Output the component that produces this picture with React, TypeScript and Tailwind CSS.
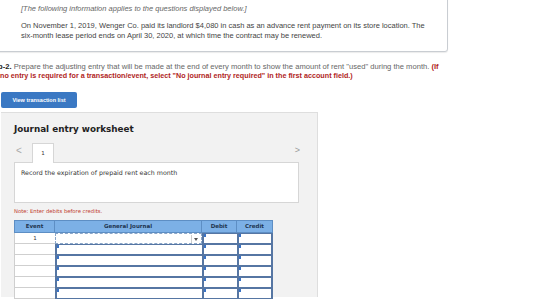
import React from "react";

const sans = { fontFamily: "'Liberation Sans', Arial, sans-serif" };
const verd = { fontFamily: "'DejaVu Sans', Verdana, sans-serif" };

function InputCell({ w, first, dd }: { w: string; first?: boolean; dd?: boolean }) {
  return (
    <div
      className={`${w} h-full relative bg-white ${
        first && dd
          ? "border border-dashed border-[#8aa6c8]"
          : "border-l-2 border-l-[#5676a3] border-b border-b-[#5676a3] border-t border-t-[#5676a3]"
      }`}
    >
      {!dd && <div className="absolute left-0 top-0 w-[2px] h-[3px] bg-[#3b73c4]" />}
      {dd && (
        <div className="absolute right-[3px] top-[1px] h-[8px] flex items-center border-l border-[#ccc] pl-[2px]">
          <div className="w-0 h-0 border-l-[2.5px] border-r-[2.5px] border-t-[3px] border-l-transparent border-r-transparent border-t-[#555]" />
        </div>
      )}
    </div>
  );
}

export default function App() {
  const rows = [0, 1, 2, 3, 4, 5];
  return (
    <div className="w-[560px] h-[307px] overflow-hidden bg-white relative" style={sans}>
      {/* info box */}
      <div className="ml-[-10px] mt-[-8px] w-[458px] h-[60px] border border-[#c9cdd2] rounded-[3px] bg-white pl-[30px] pt-[11px] shadow-[0_1px_1px_rgba(0,0,0,0.08)]">
        <div className="text-[7.5px] italic text-[#666] leading-[10px]">
          [The following information applies to the questions displayed below.]
        </div>
        <div className="mt-[7px] text-[7.5px] text-[#444] leading-[10px]">
          On November 1, 2019, Wenger Co. paid its landlord $4,080 in cash as an advance rent payment on its store location. The
          <br />
          six-month lease period ends on April 30, 2020, at which time the contract may be renewed.
        </div>
      </div>

      {/* question */}
      <div className="mt-[10px] ml-[-2px] leading-[9px] text-[#666]">
        <div className="whitespace-nowrap text-[7.6px]">
          <span className="font-bold text-[#222]">b-2.</span> Prepare the adjusting entry that will be made at the end of every month to show the amount of rent "used" during the month.{" "}
          <span className="font-bold text-[#b01e23]">(If</span>
        </div>
        <div className="whitespace-nowrap font-bold text-[#b01e23] ml-[2px] text-[7.2px]">
          no entry is required for a transaction/event, select "No journal entry required" in the first account field.)
        </div>
      </div>

      {/* button */}
      <div className="mt-[12px] ml-[1px] w-[76px] h-[16px] bg-[#3a78c3] rounded-[2px] flex items-center justify-center text-white font-bold text-[5.5px]">
        View transaction list
      </div>

      {/* worksheet panel */}
      <div className="mt-[4px] ml-[1px] w-[317px] h-[185px] bg-[#f2f2f2] border-t border-r border-[#dedede] pl-[13px] pr-[18px]" style={verd}>
        <div className="pt-[10px] text-[8.8px] font-bold text-[#222] leading-[12px]">Journal entry worksheet</div>
        <div className="mt-[7px] flex items-end h-[20px] relative">
          <div className="text-[#aaa] text-[10px] leading-none mb-[6px] ml-[2px] w-[16px]" style={sans}>&lt;</div>
          <div className="w-[22px] h-[20px] bg-white border border-b-0 border-[#d6d6d6] flex items-center justify-center text-[5.5px] text-[#333] relative top-[1px] z-10">
            1
          </div>
          <div className="flex-1" />
          <div className="text-[#999] text-[9px] leading-none mb-[7px] mr-[-1px]" style={sans}>&gt;</div>
        </div>
        <div className="h-[41px] bg-white border border-[#d6d6d6] pl-[6px] pt-[6px] text-[6.3px] text-[#333] leading-[8px]">
          Record the expiration of prepaid rent each month
        </div>
        <div className="mt-[5px] text-[5.3px] text-[#c0392b] leading-[6px]">Note: Enter debits before credits.</div>

        <div className="mt-[6px] w-[259px]">
          <div className="flex h-[13px] bg-[#7cb0e6] border border-[#5d8ec4] text-[5.5px] font-bold text-[#1f3550]">
            <div className="w-[40px] flex items-center justify-center border-r border-[#5d8ec4]">Event</div>
            <div className="w-[147px] flex items-center justify-center border-r border-[#5d8ec4]">General Journal</div>
            <div className="w-[35px] flex items-center justify-center border-r border-[#5d8ec4]">Debit</div>
            <div className="flex-1 flex items-center justify-center">Credit</div>
          </div>
          {rows.map((r) => (
            <div key={r} className="flex h-[11px]">
              <div className="w-[41px] bg-white border-l border-b border-[#cfcfcf] flex items-center justify-center text-[5.5px] text-[#333]">
                {r === 0 ? "1" : ""}
              </div>
              <InputCell w="w-[147px]" first={r === 0} dd={r === 0} />
              <InputCell w="w-[35px]" />
              <div className="flex-1 flex">
                <InputCell w="w-full" />
                <div className="w-[2px] bg-[#5676a3]" />
              </div>
            </div>
          ))}
        </div>
      </div>
    </div>
  );
}
